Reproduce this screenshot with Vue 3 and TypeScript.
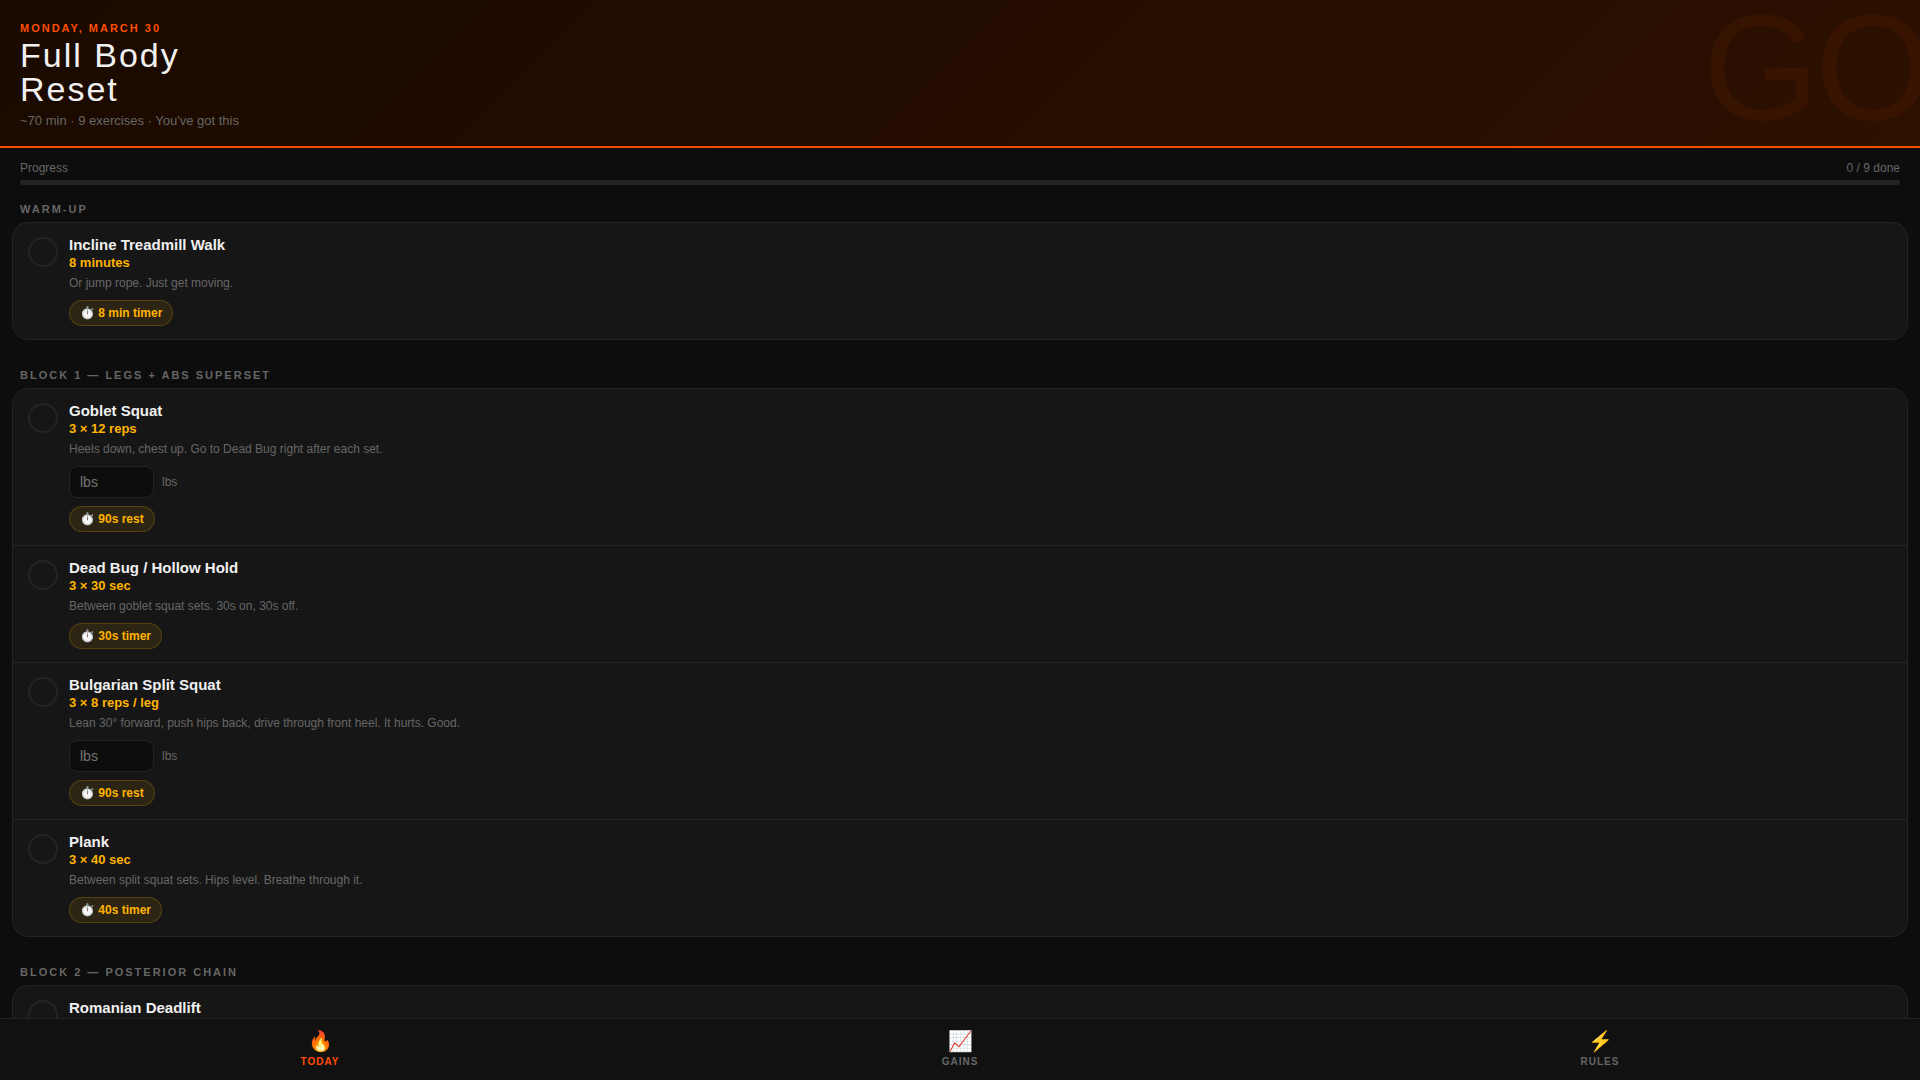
<script setup lang="ts">
import { computed, reactive, ref } from 'vue'

interface Exercise {
  id: string
  name: string
  reps?: string
  note?: string
  weighted?: boolean
  timer?: string
}

interface Block {
  title: string
  exercises: Exercise[]
}

const blocks: Block[] = [
  {
    title: 'Warm-up',
    exercises: [
      { id: 'walk', name: 'Incline Treadmill Walk', reps: '8 minutes', note: 'Or jump rope. Just get moving.', timer: '8 min timer' },
    ],
  },
  {
    title: 'Block 1 — Legs + Abs Superset',
    exercises: [
      { id: 'goblet', name: 'Goblet Squat', reps: '3 × 12 reps', note: 'Heels down, chest up. Go to Dead Bug right after each set.', weighted: true, timer: '90s rest' },
      { id: 'deadbug', name: 'Dead Bug / Hollow Hold', reps: '3 × 30 sec', note: 'Between goblet squat sets. 30s on, 30s off.', timer: '30s timer' },
      { id: 'split', name: 'Bulgarian Split Squat', reps: '3 × 8 reps / leg', note: 'Lean 30° forward, push hips back, drive through front heel. It hurts. Good.', weighted: true, timer: '90s rest' },
      { id: 'plank', name: 'Plank', reps: '3 × 40 sec', note: 'Between split squat sets. Hips level. Breathe through it.', timer: '40s timer' },
    ],
  },
  {
    title: 'Block 2 — Posterior Chain',
    exercises: [{ id: 'rdl', name: 'Romanian Deadlift' }],
  },
]

const tabs = [
  { id: 'today', icon: '🔥', label: 'Today' },
  { id: 'gains', icon: '📈', label: 'Gains' },
  { id: 'rules', icon: '⚡', label: 'Rules' },
]

const total = 9
const activeTab = ref('today')
const done = reactive<Record<string, boolean>>({})
const weights = reactive<Record<string, string>>({})
const doneCount = computed(() => Object.values(done).filter(Boolean).length)
const percent = computed(() => (doneCount.value / total) * 100)
</script>

<template>
  <div class="app">
    <header class="hero">
      <span class="hero-mark" aria-hidden="true">GO</span>
      <p class="hero-date">Monday, March 30</p>
      <h1 class="hero-title">Full Body<br />Reset</h1>
      <p class="hero-sub">~70 min · 9 exercises · You've got this</p>
    </header>

    <section class="progress">
      <div class="progress-row">
        <span>Progress</span>
        <span>{{ doneCount }} / {{ total }} done</span>
      </div>
      <div class="progress-track" role="progressbar" aria-label="Progress" :aria-valuenow="doneCount" aria-valuemin="0" :aria-valuemax="total">
        <div class="progress-fill" :style="{ width: percent + '%' }"></div>
      </div>
    </section>

    <main>
      <section v-for="block in blocks" :key="block.title" class="block">
        <h2 class="block-title">{{ block.title }}</h2>
        <div class="card">
          <article v-for="ex in block.exercises" :key="ex.id" class="exercise">
            <input :id="ex.id" v-model="done[ex.id]" class="check" type="checkbox" />
            <div class="body">
              <label class="name" :for="ex.id">{{ ex.name }}</label>
              <p v-if="ex.reps" class="reps">{{ ex.reps }}</p>
              <p v-if="ex.note" class="note">{{ ex.note }}</p>
              <div v-if="ex.weighted" class="weight">
                <input :id="ex.id + '-weight'" v-model="weights[ex.id]" class="weight-input" type="text" inputmode="decimal" placeholder="lbs" />
                <label class="weight-unit" :for="ex.id + '-weight'">lbs</label>
              </div>
              <button v-if="ex.timer" class="timer" type="button">⏱️ {{ ex.timer }}</button>
            </div>
          </article>
        </div>
      </section>
    </main>

    <nav class="tabs">
      <button
        v-for="tab in tabs"
        :key="tab.id"
        class="tab"
        :class="{ active: tab.id === activeTab }"
        type="button"
        @click="activeTab = tab.id"
      >
        <span class="tab-icon">{{ tab.icon }}</span>
        <span class="tab-label">{{ tab.label }}</span>
      </button>
    </nav>
  </div>
</template>

<style>
body {
  margin: 0;
  background: #0d0d0d;
}
</style>

<style scoped>
.app {
  padding-bottom: 62px;
  color: #f0f0f0;
  font-family: "Liberation Sans", Arial, sans-serif;
}

p,
h1,
h2 {
  margin: 0;
}

button,
input {
  box-sizing: border-box;
  margin: 0;
  font-family: inherit;
}

.hero {
  position: relative;
  overflow: hidden;
  padding: 22px 20px 18px;
  border-bottom: 2px solid #ff4d00;
  background: linear-gradient(135deg, #1a0a00 0%, #2d1000 100%);
}

.hero-mark {
  position: absolute;
  top: -7px;
  right: -8px;
  color: rgba(255, 77, 0, 0.06);
  font-size: 150px;
  line-height: 1;
  letter-spacing: -4px;
}

.hero-date {
  margin-bottom: 4px;
  color: #ff4d00;
  font-size: 11px;
  font-weight: 700;
  line-height: 12px;
  letter-spacing: 2px;
  text-transform: uppercase;
}

.hero-title {
  font-size: 34px;
  font-weight: 400;
  line-height: 34px;
  letter-spacing: 2px;
}

.hero-sub {
  margin-top: 7px;
  color: #666;
  font-size: 13px;
  line-height: 15px;
}

.progress {
  padding: 13px 20px 0;
}

.progress-row {
  display: flex;
  justify-content: space-between;
  margin-bottom: 5px;
  color: #666;
  font-size: 12px;
  line-height: 14px;
}

.progress-track {
  height: 5px;
  overflow: hidden;
  border-radius: 3px;
  background: #242424;
}

.progress-fill {
  height: 100%;
  background: #ff4d00;
}

.block {
  padding: 0 12px 11px;
}

.block-title {
  padding: 18px 8px 7px;
  color: #666;
  font-size: 11px;
  font-weight: 700;
  line-height: 12px;
  letter-spacing: 2px;
  text-transform: uppercase;
}

.card {
  overflow: hidden;
  border: 1px solid #242424;
  border-radius: 16px;
  background: #161616;
}

.exercise {
  display: flex;
  align-items: flex-start;
  gap: 11px;
  padding: 14px 15px 13px;
}

.exercise + .exercise {
  border-top: 1px solid #242424;
}

.check {
  flex: none;
  width: 30px;
  height: 30px;
  appearance: none;
  border: 2px solid #242424;
  border-radius: 50%;
}

.check:checked {
  border-color: #ff4d00;
  background: #ff4d00;
}

.body {
  display: flex;
  flex: 1;
  flex-direction: column;
  align-items: flex-start;
}

.name {
  font-size: 15px;
  font-weight: 700;
  line-height: 16px;
}

.reps {
  margin-top: 2px;
  color: #ffb300;
  font-size: 13px;
  font-weight: 700;
  line-height: 16px;
}

.note {
  margin-top: 3px;
  color: #666;
  font-size: 12px;
  line-height: 18px;
}

.weight {
  display: flex;
  align-items: center;
  gap: 8px;
  margin-top: 8px;
}

.weight-input {
  width: 85px;
  height: 32px;
  padding: 0 10px;
  border: 1px solid #242424;
  border-radius: 8px;
  background: #0d0d0d;
  color: #f0f0f0;
  font-size: 14px;
}

.weight-unit {
  color: #666;
  font-size: 12px;
}

.timer {
  margin-top: 8px;
  padding: 5px 10px;
  border: 1px solid rgba(255, 179, 0, 0.2);
  border-radius: 20px;
  background: rgba(255, 179, 0, 0.1);
  color: #ffb300;
  font-size: 12px;
  font-weight: 700;
  line-height: 14px;
}

.tabs {
  position: fixed;
  right: 0;
  bottom: 0;
  left: 0;
  display: flex;
  border-top: 1px solid #242424;
  background: #111;
}

.tab {
  display: flex;
  flex: 1;
  flex-direction: column;
  align-items: center;
  gap: 3px;
  padding: 10px 0 12px;
  border: 0;
  background: none;
  color: #666;
}

.tab.active {
  color: #ff4d00;
}

.tab-icon {
  font-size: 20px;
  line-height: 24px;
}

.tab-label {
  font-size: 10px;
  font-weight: 700;
  line-height: 12px;
  letter-spacing: 1px;
  text-transform: uppercase;
}
</style>
